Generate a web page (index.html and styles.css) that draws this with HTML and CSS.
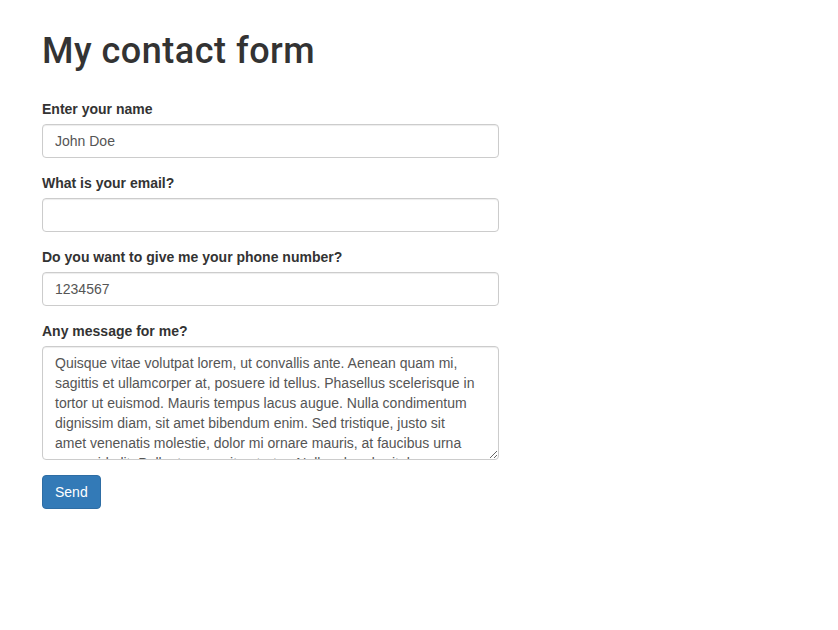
FILE: index.html
```html
<!DOCTYPE html>
<html lang="en">
<head>
<meta charset="utf-8">
<title>My contact form</title>
<link rel="stylesheet" href="styles.css">
</head>
<body>
<div class="container">
  <h1 class="title">My contact form</h1>
  <form class="contact-form">
    <div class="form-group">
      <label for="name">Enter your name</label>
      <input id="name" class="form-control" type="text" value="John Doe">
    </div>
    <div class="form-group">
      <label for="email">What is your email?</label>
      <input id="email" class="form-control" type="email" value="">
    </div>
    <div class="form-group">
      <label for="phone">Do you want to give me your phone number?</label>
      <input id="phone" class="form-control" type="text" value="1234567">
    </div>
    <div class="form-group">
      <label for="message">Any message for me?</label>
      <textarea id="message" class="form-control message" rows="5">Quisque vitae volutpat lorem, ut convallis ante. Aenean quam mi, sagittis et ullamcorper at, posuere id tellus. Phasellus scelerisque in tortor ut euismod. Mauris tempus lacus augue. Nulla condimentum dignissim diam, sit amet bibendum enim. Sed tristique, justo sit amet venenatis molestie, dolor mi ornare mauris, at faucibus urna augue id elit. Pellentesque vitae tortor. Nullam hendrerit, lorem ac pulvinar mollis, elit felis dignissim nisl.</textarea>
    </div>
    <button type="submit" class="btn btn-primary">Send</button>
  </form>
</div>
</body>
</html>
```
FILE: styles.css
```css
* {
  box-sizing: border-box;
}

html, body {
  margin: 0;
  padding: 0;
  background: #fff;
}

body {
  font-family: "Liberation Sans", Arial, Helvetica, sans-serif;
  font-size: 14px;
  line-height: 20px;
  color: #333;
}

.container {
  padding: 0 42px;
}

.title {
  margin: 32px 0 27px;
  font-family: Roboto, "Liberation Sans", Arial, sans-serif;
  font-size: 36px;
  font-weight: 500;
  letter-spacing: 0.5px;
  line-height: 1.1;
  color: #333;
}

.contact-form {
  width: 457px;
}

.form-group {
  display: flex;
  flex-direction: column;
  margin-bottom: 15px;
}

.form-group label {
  font-weight: 700;
  margin-bottom: 5px;
}

.form-control {
  display: block;
  width: 100%;
  height: 34px;
  padding: 6px 12px;
  font-family: inherit;
  font-size: 14px;
  line-height: 20px;
  color: #555;
  background: #fff;
  border: 1px solid #ccc;
  border-radius: 4px;
  box-shadow: inset 0 1px 1px rgba(0, 0, 0, .075);
  outline: none;
  margin: 0;
}

.message {
  height: 114px;
  padding-right: 20px;
  resize: vertical;
  scrollbar-width: none;
}

.message::-webkit-scrollbar {
  display: none;
}

.btn {
  display: inline-block;
  height: 34px;
  padding: 6px 12px;
  font-family: inherit;
  font-size: 14px;
  line-height: 20px;
  border: 1px solid transparent;
  border-radius: 4px;
  cursor: pointer;
}

.btn-primary {
  color: #fff;
  background: #337ab7;
  border-color: #2e6da4;
}
```
